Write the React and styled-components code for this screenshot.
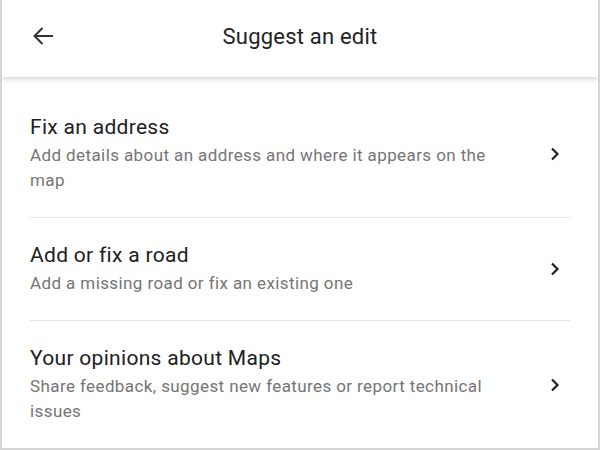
import styled, { createGlobalStyle } from "styled-components";

const GlobalStyle = createGlobalStyle`
  html, body {
    margin: 0;
    padding: 0;
    background: #fff;
  }
  * {
    box-sizing: border-box;
  }
`;

const Frame = styled.div`
  width: 600px;
  height: 450px;
  border: 2px solid #d4d4d4;
  border-top: none;
  overflow: hidden;
  background: #fff;
  font-family: Roboto, "Liberation Sans", sans-serif;
`;

const Header = styled.header`
  position: relative;
  height: 77px;
  padding-bottom: 4px;
  display: flex;
  align-items: center;
  justify-content: center;
  background: #fff;
  box-shadow: 0 2px 5px rgba(0, 0, 0, 0.18);
  z-index: 1;
`;

const BackButton = styled.button`
  position: absolute;
  left: 28px;
  top: 24px;
  width: 26px;
  height: 24px;
  padding: 0;
  border: none;
  background: none;
  display: flex;
  align-items: center;
  justify-content: center;
  color: #333;
`;

const Title = styled.h1`
  margin: 0;
  font-size: 22px;
  font-weight: 400;
  color: #222;
  letter-spacing: 0.2px;
`;

const List = styled.ul`
  list-style: none;
  margin: 0;
  padding: 13px 0 0;
`;

const Item = styled.li`
  margin: 0 28px;
  padding: 24px 0 24px;
  display: flex;
  align-items: center;
  border-bottom: 1px solid #e6e6e6;
`;

const ItemText = styled.div`
  flex: 1;
  padding-right: 50px;
`;

const ItemTitle = styled.div`
  font-size: 21px;
  line-height: 26px;
  letter-spacing: 0.3px;
  color: #202020;
  margin-bottom: 3px;
`;

const ItemDesc = styled.div`
  font-size: 17px;
  line-height: 25px;
  letter-spacing: 0.4px;
  color: #757575;
`;

const Chevron = styled.svg`
  flex: none;
  margin-right: 10px;
`;

const items = [
  {
    title: "Fix an address",
    desc: "Add details about an address and where it appears on the map",
  },
  {
    title: "Add or fix a road",
    desc: "Add a missing road or fix an existing one",
  },
  {
    title: "Your opinions about Maps",
    desc: "Share feedback, suggest new features or report technical issues",
  },
];

const App = () => {
  return (
    <>
      <GlobalStyle />
      <Frame>
        <Header>
          <BackButton aria-label="Back">
            <svg width="22" height="20" viewBox="0 0 22 20">
              <path
                d="M21 10H3M10.5 2L2.5 10l8 8"
                fill="none"
                stroke="#333"
                strokeWidth="2"
              />
            </svg>
          </BackButton>
          <Title>Suggest an edit</Title>
        </Header>
        <List>
          {items.map((item) => (
            <Item key={item.title}>
              <ItemText>
                <ItemTitle>{item.title}</ItemTitle>
                <ItemDesc>{item.desc}</ItemDesc>
              </ItemText>
              <Chevron width="10" height="14" viewBox="0 0 10 14">
                <path
                  d="M2 1.5l5.5 5.5L2 12.5"
                  fill="none"
                  stroke="#222"
                  strokeWidth="2.2"
                />
              </Chevron>
            </Item>
          ))}
        </List>
      </Frame>
    </>
  );
};

export default App;
